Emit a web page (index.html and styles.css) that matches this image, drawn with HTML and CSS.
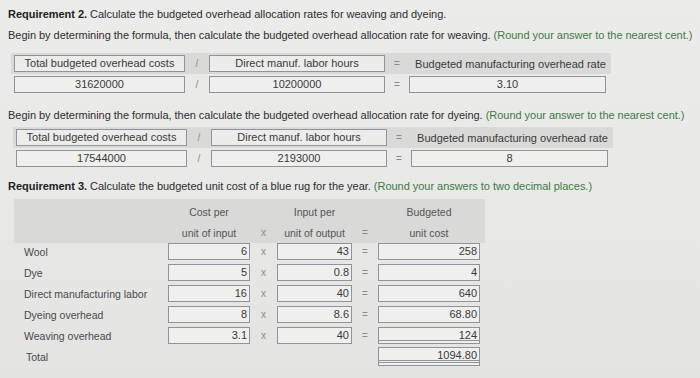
FILE: index.html
```html
<!DOCTYPE html>
<html>
<head>
<meta charset="utf-8">
<link rel="stylesheet" href="styles.css">
</head>
<body>
<div class="page">
  <p class="line first"><b>Requirement 2.</b> Calculate the budgeted overhead allocation rates for weaving and dyeing.</p>
  <p class="line">Begin by determining the formula, then calculate the budgeted overhead allocation rate for weaving. <span class="hint">(Round your answer to the nearest cent.)</span></p>

  <div class="formula f1">
    <div class="frow hdr">
      <div class="box">Total budgeted overhead costs</div>
      <div class="op">/</div>
      <div class="box">Direct manuf. labor hours</div>
      <div class="op">=</div>
      <div class="lbl">Budgeted manufacturing overhead rate</div>
    </div>
    <div class="frow">
      <div class="box">31620000</div>
      <div class="op">/</div>
      <div class="box">10200000</div>
      <div class="op">=</div>
      <div class="box">3.10</div>
    </div>
  </div>

  <p class="line l3">Begin by determining the formula, then calculate the budgeted overhead allocation rate for dyeing. <span class="hint">(Round your answer to the nearest cent.)</span></p>

  <div class="formula f2">
    <div class="frow hdr">
      <div class="box">Total budgeted overhead costs</div>
      <div class="op">/</div>
      <div class="box">Direct manuf. labor hours</div>
      <div class="op">=</div>
      <div class="lbl">Budgeted manufacturing overhead rate</div>
    </div>
    <div class="frow">
      <div class="box">17544000</div>
      <div class="op">/</div>
      <div class="box">2193000</div>
      <div class="op">=</div>
      <div class="box">8</div>
    </div>
  </div>

  <p class="line l4"><b>Requirement 3.</b> Calculate the budgeted unit cost of a blue rug for the year. <span class="hint">(Round your answers to two decimal places.)</span></p>

  <div class="cost">
    <div class="chdr">
      <div class="crow">
        <div></div><div class="ch">Cost per</div><div></div><div class="ch">Input per</div><div></div><div class="ch">Budgeted</div><div></div>
      </div>
      <div class="crow">
        <div></div><div class="ch">unit of input</div><div class="cop">x</div><div class="ch">unit of output</div><div class="cop">=</div><div class="ch">unit cost</div><div></div>
      </div>
    </div>
    <div class="crow">
      <div class="name">Wool</div><div class="in">6</div><div class="cop">x</div><div class="in">43</div><div class="cop">=</div><div class="in">258</div><div></div>
    </div>
    <div class="crow">
      <div class="name">Dye</div><div class="in">5</div><div class="cop">x</div><div class="in">0.8</div><div class="cop">=</div><div class="in">4</div><div></div>
    </div>
    <div class="crow">
      <div class="name">Direct manufacturing labor</div><div class="in">16</div><div class="cop">x</div><div class="in">40</div><div class="cop">=</div><div class="in">640</div><div></div>
    </div>
    <div class="crow">
      <div class="name">Dyeing overhead</div><div class="in">8</div><div class="cop">x</div><div class="in">8.6</div><div class="cop">=</div><div class="in">68.80</div><div></div>
    </div>
    <div class="crow">
      <div class="name">Weaving overhead</div><div class="in">3.1</div><div class="cop">x</div><div class="in">40</div><div class="cop">=</div><div class="in single">124</div><div></div>
    </div>
    <div class="crow">
      <div class="name total">Total</div><div></div><div></div><div></div><div></div><div class="in double">1094.80</div><div></div>
    </div>
  </div>
</div>
</body>
</html>
```

FILE: styles.css
```css
html, body {
  margin: 0;
  padding: 0;
}
body {
  width: 700px;
  height: 378px;
  overflow: hidden;
  background: linear-gradient(180deg, #ebebe9 0%, #e8e8e6 55%, #e3e3e1 100%);
  font-family: "Liberation Sans", Arial, sans-serif;
  font-size: 11px;
  color: #2e2e30;
}
.page {
  padding: 6px 0 0 8px;
}
.line {
  margin: 0;
  line-height: 16px;
  white-space: nowrap;
  letter-spacing: -0.03px;
}
.line + .line {
  margin-top: 5px;
}
.line b {
  font-weight: bold;
  color: #222;
}
.hint {
  color: #3f7a45;
}
.formula {
  margin-top: 10px;
  margin-left: 3px;
  width: 600px;
}
.frow {
  display: grid;
  grid-template-columns: 171px 24px 176px 24px 197px;
  align-items: center;
  padding: 0 3px;
}
.frow.hdr {
  background: #d9d9d7;
  padding: 2px 5px 2px 3px;
  margin-bottom: 2px;
}
.box {
  height: 15px;
  line-height: 15px;
  border: 1px solid #8f949c;
  background: #efefed;
  text-align: center;
  color: #3a3a3c;
}
.hdr .box {
  background: #ececea;
}
.op {
  text-align: center;
  color: #8a8a8c;
  font-size: 10px;
}
.lbl {
  text-align: center;
  color: #3a3a3c;
  padding-left: 6px;
}
.l3 {
  margin-top: 14px !important;
}
.f2 {
  margin-top: 4px;
  margin-left: 5px;
}
.l4 {
  margin-top: 11px !important;
}
.cost {
  margin-top: 5px;
  margin-left: 6px;
  width: 471px;
}
.chdr {
  background: #d9d9d7;
  padding-top: 2px;
  margin-bottom: -2px;
}
.crow {
  display: grid;
  grid-template-columns: 154px 82px 27px 75px 26px 102px 5px;
  align-items: center;
  height: 21px;
}
.ch {
  text-align: center;
  color: #555558;
  font-size: 10.5px;
}
.cop {
  text-align: center;
  color: #8a8a8c;
  font-size: 10px;
}
.name {
  padding-left: 10px;
  color: #4a4a4c;
  font-size: 10.5px;
}
.name.total {
  padding-left: 12px;
}
.in {
  height: 15px;
  line-height: 15px;
  border: 1px solid #8f949c;
  background: #efefed;
  text-align: right;
  padding-right: 2px;
  color: #3a3a3c;
}
.in.single {
  box-shadow: inset 0 -2px 0 #efefed, inset 0 -3px 0 #8f949c;
}
.in.double {
  height: 17px;
  line-height: 14px;
  box-shadow: inset 0 -2px 0 #efefed, inset 0 -3px 0 #8f949c, inset 0 -4px 0 #efefed, inset 0 -5px 0 #8f949c;
}
```
